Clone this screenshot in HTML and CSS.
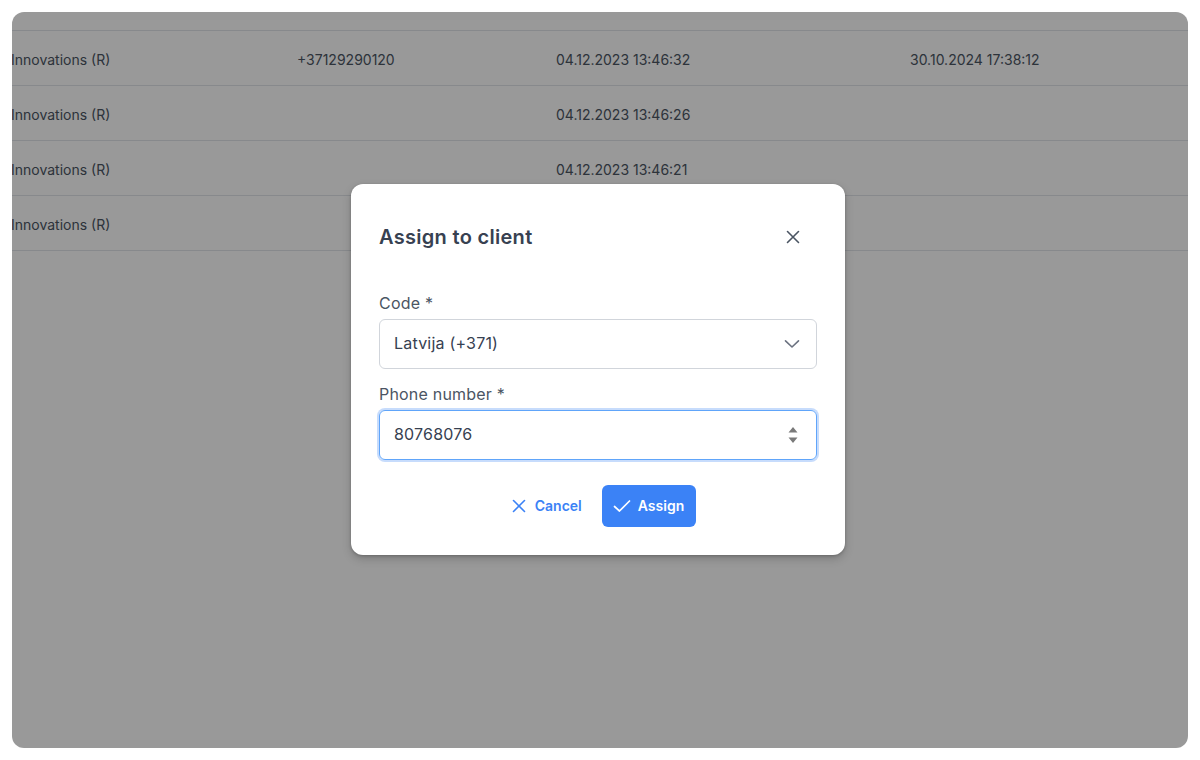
FILE: index.html
```html
<!DOCTYPE html>
<html lang="en">
<head>
<meta charset="utf-8">
<title>Assign to client</title>
<link rel="stylesheet" href="styles.css">
</head>
<body>
<div class="panel">
  <div class="table">
    <div class="row row-top"></div>
    <div class="row">
      <div class="cell">Innovations (R)</div>
      <div class="cell">+37129290120</div>
      <div class="cell">04.12.2023 13:46:32</div>
      <div class="cell">30.10.2024 17:38:12</div>
    </div>
    <div class="row">
      <div class="cell">Innovations (R)</div>
      <div class="cell"></div>
      <div class="cell">04.12.2023 13:46:26</div>
      <div class="cell"></div>
    </div>
    <div class="row">
      <div class="cell">Innovations (R)</div>
      <div class="cell"></div>
      <div class="cell">04.12.2023 13:46:21</div>
      <div class="cell"></div>
    </div>
    <div class="row">
      <div class="cell">Innovations (R)</div>
      <div class="cell"></div>
      <div class="cell">04.12.2023 13:46:15</div>
      <div class="cell"></div>
    </div>
  </div>
  <div class="overlay">
    <div class="modal">
      <div class="modal-header">
        <h2 class="modal-title">Assign to client</h2>
        <button class="close-btn" aria-label="Close">
          <svg width="14" height="14" viewBox="0 0 14 14"><path d="M1.5 1.5 L12.5 12.5 M12.5 1.5 L1.5 12.5" stroke="#4b5563" stroke-width="1.6" stroke-linecap="round" fill="none"/></svg>
        </button>
      </div>
      <div class="field">
        <label class="label">Code *</label>
        <div class="control">
          <span class="value">Latvija (+371)</span>
          <svg class="chev" width="16" height="10" viewBox="0 0 16 10"><path d="M1.5 1.8 L8 8 L14.5 1.8" stroke="#6b7280" stroke-width="1.6" stroke-linecap="round" stroke-linejoin="round" fill="none"/></svg>
        </div>
      </div>
      <div class="field field-phone">
        <label class="label">Phone number *</label>
        <div class="control focused">
          <span class="value">80768076</span>
          <svg class="spin" width="12" height="22" viewBox="0 0 12 22"><path d="M6 3 L10.5 8.5 L1.5 8.5 Z M1.5 13.5 L10.5 13.5 L6 19 Z" fill="#7a7a7a"/></svg>
        </div>
      </div>
      <div class="actions">
        <button class="btn btn-text">
          <svg width="14" height="14" viewBox="0 0 14 14"><path d="M1.5 1.5 L12.5 12.5 M12.5 1.5 L1.5 12.5" stroke="#3b82f6" stroke-width="1.6" stroke-linecap="round" fill="none"/></svg>
          <span>Cancel</span>
        </button>
        <button class="btn btn-primary">
          <svg width="18" height="14" viewBox="0 0 18 14"><path d="M1.5 7.5 L6.5 12 L16.5 2" stroke="#ffffff" stroke-width="1.7" stroke-linecap="round" stroke-linejoin="round" fill="none"/></svg>
          <span>Assign</span>
        </button>
      </div>
    </div>
  </div>
</div>
</body>
</html>
```
FILE: styles.css
```css
* { box-sizing: border-box; }
html, body { margin: 0; padding: 0; }
body {
  background: #ffffff;
  font-family: Inter, "Noto Sans", sans-serif;
  width: 1200px;
  height: 760px;
  overflow: hidden;
}
.panel {
  position: relative;
  margin: 12px;
  height: 736px;
  background: #ffffff;
  border-radius: 12px;
  overflow: hidden;
}
.table { display: flex; flex-direction: column; }
.row {
  display: grid;
  grid-template-columns: 285px 259px 354px 1fr;
  height: 55px;
  align-items: center;
  border-bottom: 1px solid #e2e4ea;
  font-size: 14px;
  color: #4b5563;
}
.row-top { height: 19px; }
.cell { white-space: nowrap; padding-top: 2px; }
.row .cell:first-child { margin-left: -1px; }
.overlay {
  position: absolute;
  inset: 0;
  background: rgba(0, 0, 0, 0.4);
  display: flex;
  justify-content: center;
  align-items: center;
}
.modal {
  width: 494px;
  margin-right: 4px;
  margin-bottom: 22px;
  background: #ffffff;
  border-radius: 12px;
  box-shadow: 0 4px 10px rgba(0,0,0,0.18), 0 1px 3px rgba(0,0,0,0.2);
  padding: 39px 28px 28px;
}
.modal-header {
  display: flex;
  justify-content: space-between;
  align-items: center;
  height: 28px;
}
.modal-title {
  margin: 0;
  font-size: 20px;
  line-height: 28px;
  font-weight: 600;
  color: #374151;
  letter-spacing: 0.3px;
}
.close-btn {
  border: 0;
  background: transparent;
  padding: 0;
  width: 14px;
  height: 14px;
  margin-right: 17px;
  display: flex;
}
.field { display: flex; flex-direction: column; gap: 4px; margin-top: 40px; }
.field-phone { margin-top: 13px; }
.label {
  font-size: 16px;
  line-height: 24px;
  color: #4b5563;
  letter-spacing: 0.2px;
}
.control {
  height: 50px;
  border: 1px solid #d1d5db;
  border-radius: 6px;
  display: flex;
  align-items: center;
  justify-content: space-between;
  padding: 0 16px 0 14px;
}
.control.focused {
  border-color: #60a5fa;
  box-shadow: 0 0 0 2px #c7dcfc;
  padding-right: 17px;
}
.value {
  font-size: 16px;
  color: #374151;
  padding-bottom: 1px;
  letter-spacing: 0.2px;
}
.actions {
  display: flex;
  justify-content: center;
  gap: 8px;
  margin-top: 25px;
}
.btn {
  height: 42px;
  border: 0;
  border-radius: 6px;
  font-family: Inter, "Noto Sans", sans-serif;
  font-size: 14px;
  font-weight: 600;
  display: flex;
  align-items: center;
  gap: 9px;
  padding: 0 12px;
}
.btn-text { background: transparent; color: #3b82f6; }
.btn-primary { background: #3b82f6; color: #ffffff; padding: 0 12px 0 11px; gap: 7px; }
```
